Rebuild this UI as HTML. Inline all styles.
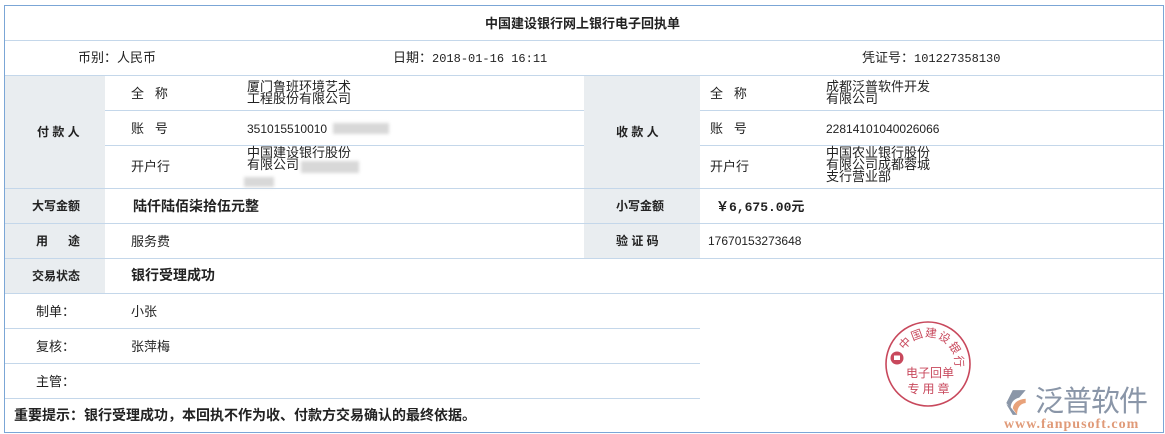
<!DOCTYPE html>
<html><head><meta charset="utf-8">
<style>
*{margin:0;padding:0;box-sizing:border-box}
body{width:1165px;height:434px;background:#fff;position:relative;overflow:hidden;font-family:"Liberation Sans","Noto Sans CJK SC","WenQuanYi Zen Hei",sans-serif;font-size:13px;color:#222}
.a{position:absolute}
.g{position:absolute;background:#e9edf0}
.h{position:absolute;height:1px;background:#c4d7ea}
.t{position:absolute;white-space:nowrap;line-height:13px}
.b{font-weight:bold}
.m{font-family:"Liberation Mono","Noto Sans CJK SC",monospace;font-size:12px}
.blur{position:absolute;background:#d8d8d8;filter:blur(1.5px)}
</style></head><body>
<div class="a" style="left:4px;top:5px;width:1160px;height:428px;border:1px solid #7ba6d6"></div>
<div class="g" style="left:5px;top:75px;width:100px;height:218px"></div>
<div class="g" style="left:584px;top:75px;width:116px;height:183px"></div>
<div class="h" style="left:5px;top:40px;width:1158px"></div>
<div class="h" style="left:5px;top:75px;width:1158px"></div>
<div class="h" style="left:105px;top:110px;width:479px"></div>
<div class="h" style="left:700px;top:110px;width:463px"></div>
<div class="h" style="left:105px;top:145px;width:479px"></div>
<div class="h" style="left:700px;top:145px;width:463px"></div>
<div class="h" style="left:5px;top:188px;width:1158px"></div>
<div class="h" style="left:5px;top:223px;width:1158px"></div>
<div class="h" style="left:5px;top:258px;width:1158px"></div>
<div class="h" style="left:5px;top:293px;width:1158px"></div>
<div class="h" style="left:5px;top:328px;width:695px"></div>
<div class="h" style="left:5px;top:363px;width:695px"></div>
<div class="h" style="left:5px;top:398px;width:695px"></div>
<div class="t b" style="left:0;width:1165px;text-align:center;top:17px;font-size:13px">中国建设银行网上银行电子回执单</div>
<div class="t" style="left:78px;top:51px">币别：人民币</div>
<div class="t" style="left:393px;top:51px">日期：<span class="m">2018-01-16 16:11</span></div>
<div class="t" style="left:862px;top:51px">凭证号：<span class="m">101227358130</span></div>
<div class="t b" style="left:37px;top:126px;font-size:12px">付 款 人</div>
<div class="t" style="left:131px;top:87px">全&nbsp;&nbsp;&nbsp;称</div>
<div class="t" style="left:247px;top:81px;line-height:12px">厦门鲁班环境艺术<br>工程股份有限公司</div>
<div class="t" style="left:131px;top:122px">账&nbsp;&nbsp;&nbsp;号</div>
<div class="t" style="left:247px;top:123px;font-size:12px">351015510010</div>
<div class="blur" style="left:333px;top:123px;width:56px;height:11px"></div>
<div class="t" style="left:131px;top:160px">开户行</div>
<div class="t" style="left:247px;top:147px;line-height:12px">中国建设银行股份<br>有限公司</div>
<div class="blur" style="left:301px;top:161px;width:58px;height:12px"></div>
<div class="blur" style="left:244px;top:177px;width:30px;height:10px"></div>
<div class="t b" style="left:616px;top:126px;font-size:12px">收 款 人</div>
<div class="t" style="left:710px;top:87px">全&nbsp;&nbsp;&nbsp;称</div>
<div class="t" style="left:826px;top:81px;line-height:12px">成都泛普软件开发<br>有限公司</div>
<div class="t" style="left:710px;top:122px">账&nbsp;&nbsp;&nbsp;号</div>
<div class="t" style="left:826px;top:123px;font-size:12px">22814101040026066</div>
<div class="t" style="left:710px;top:160px">开户行</div>
<div class="t" style="left:826px;top:147px;line-height:12px">中国农业银行股份<br>有限公司成都蓉城<br>支行营业部</div>
<div class="t b" style="left:32px;top:200px;font-size:12px">大写金额</div>
<div class="t b" style="left:133px;top:200px;font-size:14px">陆仟陆佰柒拾伍元整</div>
<div class="t b" style="left:616px;top:200px;font-size:12px">小写金额</div>
<div class="t b" style="left:716px;top:200px;font-size:13px"><span class="m" style="font-size:13px">￥6,675.00</span>元</div>
<div class="t b" style="left:36px;top:235px;font-size:12px">用&nbsp;&nbsp;&nbsp;&nbsp;&nbsp;&nbsp;途</div>
<div class="t" style="left:131px;top:235px">服务费</div>
<div class="t b" style="left:616px;top:235px;font-size:12px">验 证 码</div>
<div class="t" style="left:708px;top:235px;font-size:12px">17670153273648</div>
<div class="t b" style="left:32px;top:270px;font-size:12px">交易状态</div>
<div class="t b" style="left:131px;top:269px;font-size:14px">银行受理成功</div>
<div class="t" style="left:36px;top:305px">制单：</div>
<div class="t" style="left:131px;top:305px">小张</div>
<div class="t" style="left:36px;top:340px">复核：</div>
<div class="t" style="left:131px;top:340px">张萍梅</div>
<div class="t" style="left:36px;top:375px">主管：</div>
<div class="t b" style="left:14px;top:409px;font-size:14px">重要提示：银行受理成功，本回执不作为收、付款方交易确认的最终依据。</div>
<svg class="a" style="left:880px;top:316px" width="100" height="96" viewBox="0 0 100 96">
<circle cx="48" cy="48" r="42" fill="none" stroke="#c8485c" stroke-width="1.6"/>
<circle cx="17" cy="42" r="6.5" fill="#c8485c"/>
<rect x="14" y="39.5" width="6" height="4.5" fill="#fff"/>
<defs><path id="arc" d="M24.6 34.5 A27 27 0 0 1 74.1 55"/></defs>
<text font-size="11.5" fill="#c8485c" font-family="Noto Sans CJK SC,sans-serif" letter-spacing="1"><textPath href="#arc">中国建设银行</textPath></text>
<text x="50" y="61" text-anchor="middle" font-size="12" fill="#c8485c" font-family="Noto Sans CJK SC,sans-serif">电子回单</text>
<text x="50" y="77" text-anchor="middle" font-size="12" fill="#c8485c" font-family="Noto Sans CJK SC,sans-serif" letter-spacing="3">专用章</text>
</svg>
<svg class="a" style="left:1002px;top:389px" width="28" height="28" viewBox="0 0 22 26">
<path d="M8 1 L20 1 L14 8 Q6 10 6 18 L2 13 Z" fill="#8a96a8"/>
<path d="M8 18 Q9 10 20 9 L20 13 Q12 14 12 24 Z" fill="#e8a27a"/>
<path d="M2 14 L8 24 L12 24 L6 17 Z" fill="#8a96a8"/>
</svg>
<div class="t" style="left:1035px;top:387px;font-size:29px;line-height:30px;color:#8a96a8;letter-spacing:-1px">泛普软件</div>
<div class="t" style="left:1004px;top:418px;font-size:14px;color:#e09a78;font-family:'Liberation Serif',serif;font-weight:bold;letter-spacing:1px">www.fanpusoft.com</div>
</body></html>
